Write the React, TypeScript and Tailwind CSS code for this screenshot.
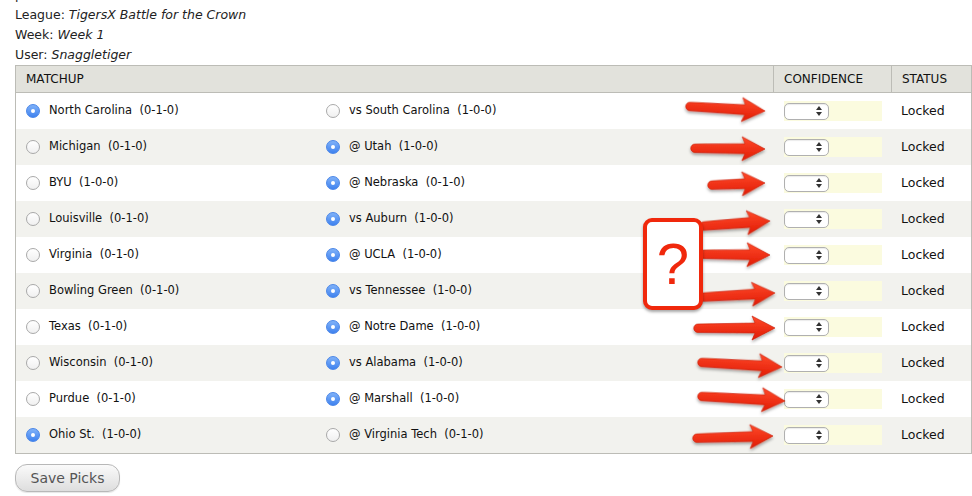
import React from "react";

type Row = { a: string; ar: string; b: string; br: string; pick: "a" | "b" };

const rows: Row[] = [
  { a: "North Carolina", ar: "(0-1-0)", b: "vs South Carolina", br: "(1-0-0)", pick: "a" },
  { a: "Michigan", ar: "(0-1-0)", b: "@ Utah", br: "(1-0-0)", pick: "b" },
  { a: "BYU", ar: "(1-0-0)", b: "@ Nebraska", br: "(0-1-0)", pick: "b" },
  { a: "Louisville", ar: "(0-1-0)", b: "vs Auburn", br: "(1-0-0)", pick: "b" },
  { a: "Virginia", ar: "(0-1-0)", b: "@ UCLA", br: "(1-0-0)", pick: "b" },
  { a: "Bowling Green", ar: "(0-1-0)", b: "vs Tennessee", br: "(1-0-0)", pick: "b" },
  { a: "Texas", ar: "(0-1-0)", b: "@ Notre Dame", br: "(1-0-0)", pick: "b" },
  { a: "Wisconsin", ar: "(0-1-0)", b: "vs Alabama", br: "(1-0-0)", pick: "b" },
  { a: "Purdue", ar: "(0-1-0)", b: "@ Marshall", br: "(1-0-0)", pick: "b" },
  { a: "Ohio St.", ar: "(1-0-0)", b: "@ Virginia Tech", br: "(0-1-0)", pick: "a" },
];

function Radio({ on }: { on: boolean }) {
  return on ? (
    <span className="inline-flex h-[14px] w-[14px] shrink-0 items-center justify-center rounded-full border border-[#4a86e8] bg-gradient-to-b from-[#7fb1f8] to-[#3f82ef]">
      <span className="h-[4px] w-[4px] rounded-full bg-white" />
    </span>
  ) : (
    <span className="inline-block h-[14px] w-[14px] shrink-0 rounded-full border border-[#a9a9a9] bg-gradient-to-b from-white to-[#f0f0f0]" />
  );
}

function Select() {
  return (
    <div className="flex h-[17px] w-[45px] items-center justify-end rounded-[5px] border border-[#b0b0b0] bg-white pr-[6px] shadow-[inset_0_1px_1px_rgba(0,0,0,0.08)]">
      <svg width="6" height="10" viewBox="0 0 6 10">
        <polygon points="3,0 6,4 0,4" fill="#333" />
        <polygon points="0,6 6,6 3,10" fill="#333" />
      </svg>
    </div>
  );
}

type Arrow = [number, number, number, number];
const arrows: Arrow[] = [
  [686, 106, 765, 111],
  [691, 148, 765, 149],
  [708, 185, 765, 183],
  [700, 226, 770, 221],
  [700, 254, 770, 255],
  [700, 297, 775, 293],
  [694, 328, 775, 328],
  [698, 362, 782, 367],
  [698, 396, 785, 401],
  [693, 438, 773, 436],
];

function ArrowShape({ a }: { a: Arrow }) {
  const [x1, y1, x2, y2] = a;
  const L = Math.hypot(x2 - x1, y2 - y1);
  const ang = (Math.atan2(y2 - y1, x2 - x1) * 180) / Math.PI;
  const d = `M 4,-4 L ${L - 20},-5 L ${L - 23},-12 L ${L},0 L ${L - 23},12 L ${L - 20},5 L 4,4.5 A 4.25 4.25 0 0 1 4,-4 Z`;
  return (
    <g transform={`translate(${x1} ${y1}) rotate(${ang})`}>
      <path d={d} fill="url(#rg)" stroke="#c81c06" strokeWidth="0.6" filter="url(#sh)" />
    </g>
  );
}

export default function App() {
  return (
    <div
      className="relative h-[496px] w-[972px] overflow-hidden bg-white text-[#111]"
      style={{ fontFamily: '"DejaVu Sans", "Noto Sans", sans-serif' }}
    >
      <div className="pl-[15px] text-[12.5px] leading-[20px] text-[#222]">
        <div className="-mt-[15px]">pool</div>
        <div>
          League: <i>TigersX Battle for the Crown</i>
        </div>
        <div>
          Week: <i>Week 1</i>
        </div>
        <div>
          User: <i>Snaggletiger</i>
        </div>
      </div>

      <div className="ml-[15px] w-[957px] border border-[#bcbcb6] text-[11.5px]">
        <div className="flex h-[27px] items-center border-b border-[#bcbcb6] bg-[#e2e2dc] text-[12px]">
          <div className="flex h-full w-[757px] items-center pl-[10px]">MATCHUP</div>
          <div className="flex h-full w-[118px] items-center border-l border-[#bcbcb6] pl-[10px]">CONFIDENCE</div>
          <div className="flex h-full flex-1 items-center border-l border-[#bcbcb6] pl-[10px]">STATUS</div>
        </div>
        {rows.map((r, i) => (
          <div key={i} className={`flex h-[36px] items-center ${i % 2 === 1 ? "bg-[#f2f2ee]" : "bg-white"}`}>
            <div className="flex w-[310px] items-center gap-[9px] pl-[10px]">
              <Radio on={r.pick === "a"} />
              <span className="whitespace-pre">{r.a}  {r.ar}</span>
            </div>
            <div className="flex w-[448px] items-center gap-[9px]">
              <Radio on={r.pick === "b"} />
              <span className="whitespace-pre">{r.b}  {r.br}</span>
            </div>
            <div className="w-[118px] pl-[10px]">
              <div className="flex h-[20px] w-[98px] items-center bg-[#fbfbdf]">
                <Select />
              </div>
            </div>
            <div className="flex-1 pl-[9px] text-[12.5px]">Locked</div>
          </div>
        ))}
      </div>

      <div className="ml-[15px] mt-[10px]">
        <button className="h-[28px] w-[105px] rounded-[12px] border border-[#b8b8b8] bg-gradient-to-b from-[#fafafa] to-[#dedede] text-[14px] text-[#555] shadow-[0_1px_1px_rgba(0,0,0,0.1)]">
          Save Picks
        </button>
      </div>

      <svg className="pointer-events-none absolute left-0 top-0" width="972" height="496">
        <defs>
          <linearGradient id="rg" x1="0" y1="0" x2="0" y2="1">
            <stop offset="0" stopColor="#ff4a2a" />
            <stop offset="1" stopColor="#e01a04" />
          </linearGradient>
          <filter id="sh" x="-10%" y="-50%" width="120%" height="200%">
            <feDropShadow dx="0" dy="2" stdDeviation="1.5" floodColor="#000" floodOpacity="0.35" />
          </filter>
        </defs>
        {arrows.map((a, i) => (
          <ArrowShape key={i} a={a} />
        ))}
      </svg>

      <div className="absolute left-[643px] top-[218px] flex h-[92px] w-[60px] items-center justify-center rounded-[9px] border-[4px] border-[#f0280c] bg-white shadow-[0_2px_3px_rgba(0,0,0,0.35)]">
        <span className="text-[58px] leading-none text-[#f0280c]" style={{ fontFamily: '"Liberation Sans", sans-serif' }}>
          ?
        </span>
      </div>
    </div>
  );
}
